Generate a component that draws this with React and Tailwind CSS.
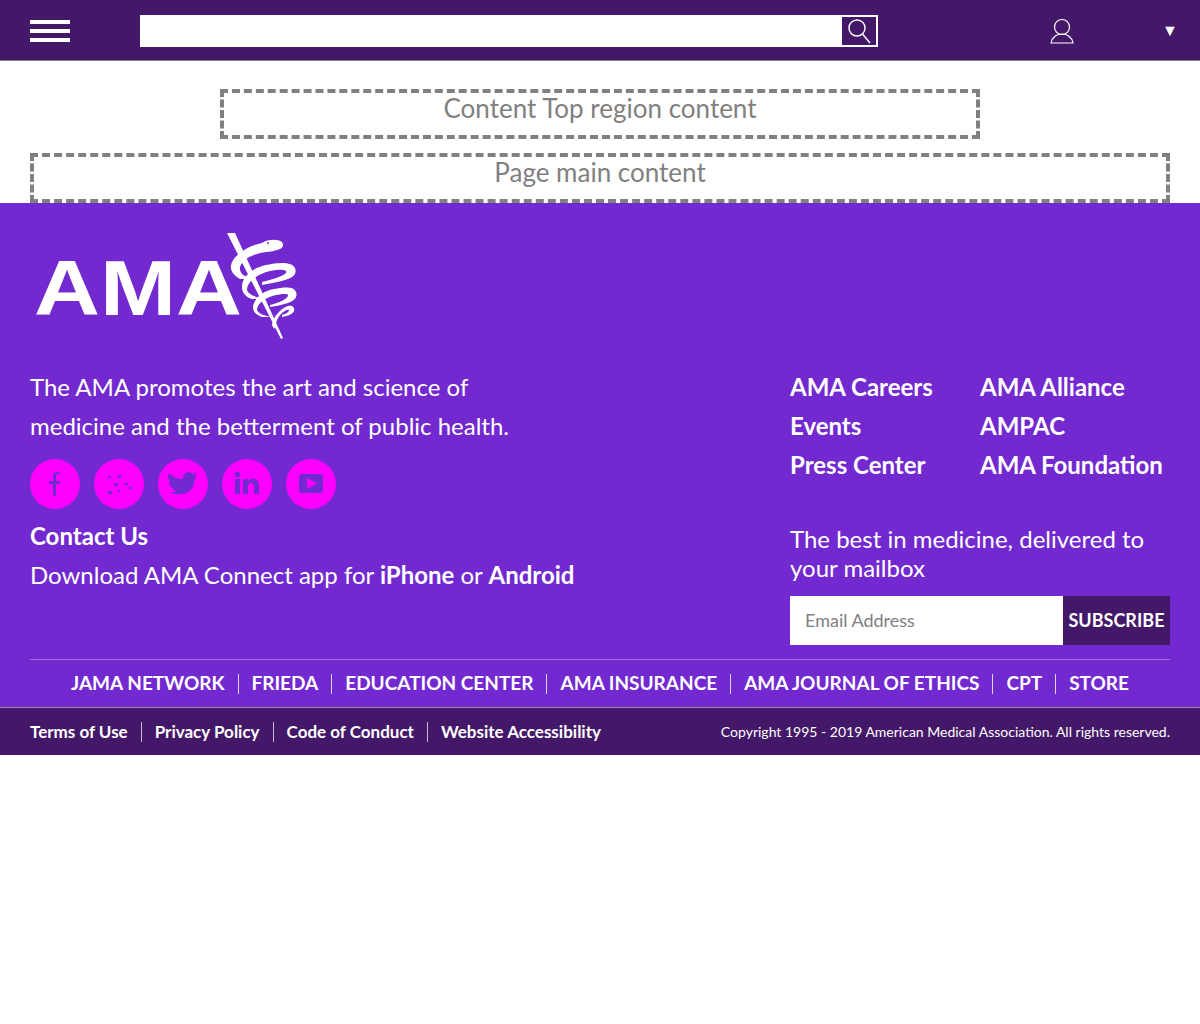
const leftLinks = ["Terms of Use", "Privacy Policy", "Code of Conduct", "Website Accessibility"];
const networkLinks = ["JAMA NETWORK", "FRIEDA", "EDUCATION CENTER", "AMA INSURANCE", "AMA JOURNAL OF ETHICS", "CPT", "STORE"];
const col1 = ["AMA Careers", "Events", "Press Center"];
const col2 = ["AMA Alliance", "AMPAC", "AMA Foundation"];

function Logo() {
  return (
    <svg width="270" height="110" viewBox="0 0 270 110" className="block" fill="none">
      <text x="4" y="82" fill="#fff" fontFamily="Liberation Sans, sans-serif" fontWeight="700" fontSize="77" textLength="208" lengthAdjust="spacingAndGlyphs">AMA</text>
      {/* staff */}
      <path d="M197 0 L205 0 L253 105 L251 106 Z" fill="#fff" />
      {/* head and first coil */}
      <path d="M232 10 C238 6 248 6 252 9 C254 12 253 15 250 16 C245 18 240 19 236 19 C228 20 216 24 212 30 C209 34 209 38 213 42 C216 44 220 45 224 46 L210 46 C204 43 200 38 201 32 C203 22 220 12 232 10 Z" fill="#fff" />
      <circle cx="238" cy="10" r="1" fill="#7229d0" />
      {/* second coil */}
      <path d="M212 54 C212 44 222 35 236 32 C250 29 262 29 265 35 C267 40 264 44 258 46 C250 49 240 50 232 52 L232 49 C240 47 252 44 256 40 C258 36 250 36 240 38 C228 41 218 48 217 56 C217 60 222 63 232 66 L222 66 C216 64 212 60 212 54 Z" fill="#fff" />
      {/* third coil */}
      <path d="M223 74 C224 66 232 58 244 56 C254 54 264 53 266 59 C268 64 264 68 258 70 C252 72 246 73 240 74 L240 72 C248 70 256 67 258 63 C259 60 252 61 246 62 C236 64 228 70 227 76 C227 80 234 83 242 84 L232 84 C226 82 223 79 223 74 Z" fill="#fff" />
      {/* last small coil */}
      <path d="M242 92 C243 84 250 76 258 73 C262 72 265 74 264 78 C263 81 258 83 252 84 L252 82 C256 81 259 79 259 77 C258 76 254 78 251 81 C248 84 246 88 246 92 L244 96 Z" fill="#fff" />
    </svg>
  );
}

function Social({ children }) {
  return (
    <span className="flex h-[50px] w-[50px] items-center justify-center rounded-full bg-[#ff00ff]">
      <svg width="50" height="50" viewBox="0 0 50 50" fill="#7229d0">{children}</svg>
    </span>
  );
}

export default function App() {
  return (
    <div className="min-h-[1024px] bg-white font-['Lato',sans-serif] text-white">
      <header className="flex h-[61px] items-start border-b border-[#808080] bg-[#441868] pl-[30px]">
        <div className="mt-5 flex w-[40px] flex-col gap-[5px]">
          <span className="h-1 bg-white" />
          <span className="h-1 bg-white" />
          <span className="h-1 bg-white" />
        </div>
        <div className="ml-[70px] mt-[15px] flex h-8 w-[738px]">
          <div className="flex-1 bg-white" />
          <div className="flex w-[38px] items-center justify-center border-2 border-white bg-[#441868]">
            <svg width="24" height="26" viewBox="0 0 24 26" fill="none" stroke="#fff" strokeWidth="1.4">
              <circle cx="10" cy="10" r="8" />
              <path d="M15.500 16 L23 25" />
            </svg>
          </div>
        </div>
        <svg width="24" height="26" viewBox="0 0 24 26" fill="none" stroke="#fff" strokeWidth="1.200" className="ml-[172px] mt-[18px]">
          <circle cx="12" cy="9" r="7.500" />
          <path d="M1 25 C2 19 7 16 12 16 C17 16 22 19 23 25 Z" />
        </svg>
        <span className="ml-[88px] mt-5 text-[16px] leading-5">▼</span>
      </header>

      <main className="text-center text-[26px] leading-[30px] text-[#808080]">
        <div className="mx-auto mt-7 h-[50px] w-[760px] border-4 border-dashed border-[#808080]">Content Top region content</div>
        <div className="mx-[30px] mt-[14px] h-[50px] border-4 border-dashed border-[#808080]">Page main content</div>
      </main>

      <footer className="bg-[#7229d0]">
        <div className="px-[30px] pt-[30px]">
          <Logo />
          <div className="mt-[24px] flex justify-between">
            <div>
              <p className="text-[24px] leading-[39px]">The AMA promotes the art and science of<br />medicine and the betterment of public health.</p>
              <div className="mt-[14px] flex gap-[14px]">
                <Social>
                  <path d="M23 37 V25 H19 V22 H23 V17 C23 14 25 13 27 13 H30 V15 H28 C27 15 26 16 26 17 V22 H30 V25 H26 V37 Z" />
                </Social>
                <Social>
                  <rect x="14" y="17" width="3" height="2" />
                  <rect x="24" y="16" width="3" height="3" />
                  <rect x="20" y="24" width="4" height="3" />
                  <rect x="30" y="24" width="4" height="2" />
                  <rect x="14" y="32" width="4" height="3" />
                  <rect x="35" y="28" width="3" height="2" />
                  <rect x="24" y="31" width="2" height="2" />
                </Social>
                <Social>
                  <path d="M11 33 C24 39 37 33 37 19 L40 16 L36 17 L39 13 L35 15 C31 11 24 14 25 20 C19 20 14 17 11 14 C9 18 11 22 13 24 L11 23 C11 26 13 29 16 29 L14 30 C15 31 17 32 19 32 C17 33 14 34 11 33 Z" />
                </Social>
                <Social>
                  <rect x="13" y="20" width="5" height="15" />
                  <circle cx="15.500" cy="15.500" r="2.800" />
                  <path d="M21 20 H26 V22 C29 18 37 19 37 26 V35 H32 V27 C32 23 26 23 26 27 V35 H21 Z" />
                </Social>
                <Social>
                  <rect x="13" y="15" width="24" height="19" rx="3" />
                  <path d="M21 19 L31 24.500 L21 30 Z" fill="#ff00ff" />
                </Social>
              </div>
              <p className="mt-[7px] text-[24px] font-bold leading-[39px]">Contact Us</p>
              <p className="text-[24px] leading-[39px]">Download AMA Connect app for <b className="font-bold">iPhone</b> or <b className="font-bold">Android</b></p>
            </div>
            <div className="w-[380px]">
              <div className="flex text-[24px] font-bold leading-[39px]">
                <div className="w-[190px]">{col1.map((l) => <p key={l}>{l}</p>)}</div>
                <div>{col2.map((l) => <p key={l}>{l}</p>)}</div>
              </div>
              <p className="mt-[40px] text-[24px] leading-[29px]">The best in medicine, delivered to<br />your mailbox</p>
              <div className="mt-[14px] flex h-[49px]">
                <div className="flex flex-1 items-center bg-white pl-[15px] text-[18px] text-[#808080]">Email Address</div>
                <div className="flex w-[107px] items-center justify-center bg-[#441868] text-[18px] font-bold">SUBSCRIBE</div>
              </div>
            </div>
          </div>
          <div className="mt-[14px] flex h-[48px] items-center justify-center border-t border-[#9b6fd9] text-[19px] font-bold">
            {networkLinks.map((l, i) => (
              <span key={l} className="flex items-center">
                {i > 0 && <span className="mx-[13px] h-[20px] w-px bg-white/80" />}
                {l}
              </span>
            ))}
          </div>
        </div>
        <div className="flex h-[48px] items-center justify-between border-t border-[#9a8aa8] bg-[#441868] px-[30px]">
          <div className="flex items-center text-[17px] font-bold">
            {leftLinks.map((l, i) => (
              <span key={l} className="flex items-center">
                {i > 0 && <span className="mx-[13px] h-[20px] w-px bg-white/70" />}
                {l}
              </span>
            ))}
          </div>
          <span className="text-[14px]">Copyright 1995 - 2019 American Medical Association. All rights reserved.</span>
        </div>
      </footer>
    </div>
  );
}
